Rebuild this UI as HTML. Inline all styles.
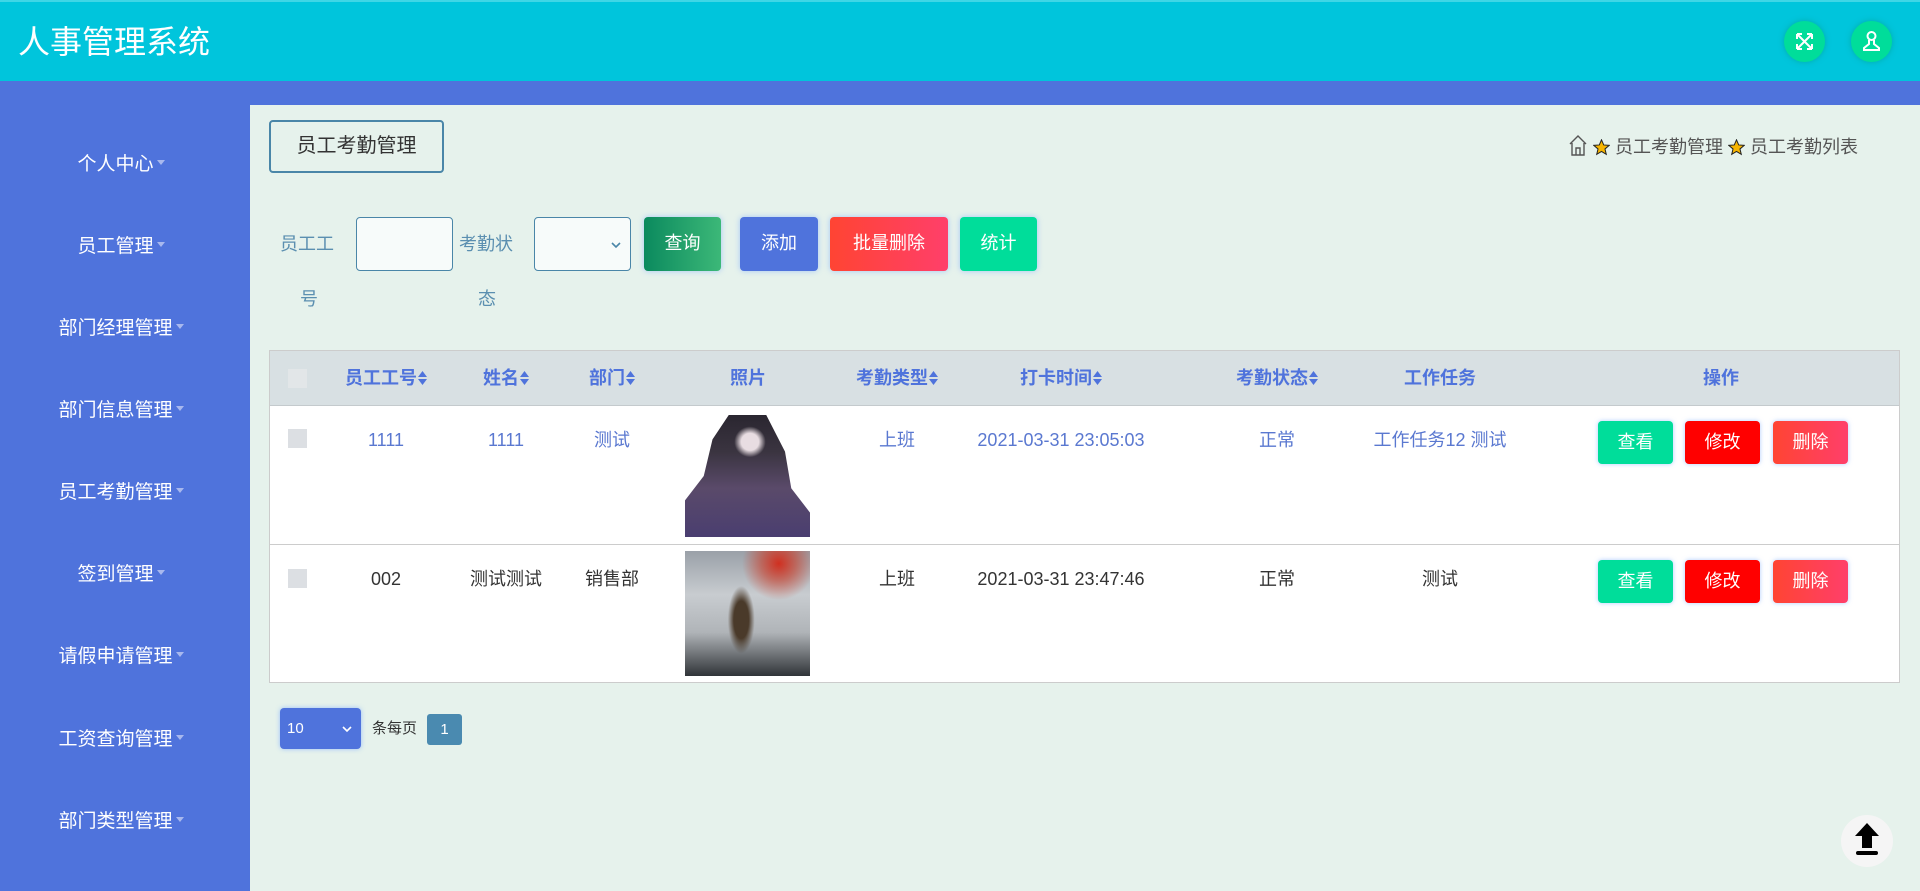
<!DOCTYPE html>
<html><head><meta charset="utf-8">
<style>
*{box-sizing:border-box;margin:0;padding:0}
body{width:1920px;height:891px;overflow:hidden;background:#e6f2ec;font-family:"Liberation Sans","Noto Sans CJK SC",sans-serif;position:relative}
.hdr{position:absolute;left:0;top:0;width:1920px;height:81px;background:#00c5dc;border-top:2px solid #3fd6e6}
.title{position:absolute;left:18px;top:20px;color:#fff;font-size:32px;line-height:40px}
.circ{position:absolute;top:19px;width:41px;height:41px;border-radius:50%;background:#00dd9a;box-shadow:0 0 6px rgba(0,150,120,.5)}
.band{position:absolute;left:0;top:81px;width:1920px;height:24px;background:#4f73dc}
.side{position:absolute;left:0;top:81px;width:250px;height:810px;background:#4f73dc}
.si{position:absolute;left:-4px;width:250px;text-align:center;color:#fff;font-size:19px;line-height:26px}
.si i{display:inline-block;width:0;height:0;border-left:4px solid transparent;border-right:4px solid transparent;border-top:5px solid #a8b8ee;vertical-align:middle;margin-left:3px;margin-top:-4px}
.tab{position:absolute;left:269px;top:120px;width:175px;height:53px;border:2px solid #4a86a8;border-radius:4px;color:#333;font-size:20px;text-align:center;line-height:49px}
.bc{position:absolute;left:1568px;top:133px;font-size:18px;color:#555;line-height:24px}
.st{display:inline-block;width:17px;height:17px;vertical-align:-3px}
.lbl{position:absolute;color:#5b8fb0;font-size:18px;line-height:24px}
.inp{position:absolute;top:217px;height:54px;border:1px solid #4a86a8;border-radius:4px;background:#f7fbfa}
.btn{position:absolute;color:#fff;font-size:18px;text-align:center;border-radius:4px;box-shadow:0 0 6px rgba(120,170,255,.6)}
.tb{position:absolute;left:269px;top:350px;width:1631px;height:333px;background:#fff;border:1px solid #ccc}
.th{position:absolute;left:0;top:0;width:100%;height:55px;background:#d8e0e3;border-bottom:1px solid #c4cacd}
.c{position:absolute;transform:translateX(-50%);white-space:nowrap;font-size:18px;line-height:24px}
.h{color:#4f73dc;font-weight:bold;top:15px}
.r1{color:#5a78d0}
.r2{color:#333}
.cb{position:absolute;left:18px;width:19px;height:19px;background:#dcdfe3}
.sb{position:absolute;width:75px;height:43px;line-height:43px;color:#fff;font-size:18px;text-align:center;border-radius:4px;box-shadow:0 0 5px rgba(120,170,255,.6)}
.arr{display:inline-block;width:9px;height:14px;vertical-align:-1px;margin-left:1px}
</style></head><body>
<svg width="0" height="0" style="position:absolute"><defs><symbol id="ar" viewBox="0 0 9 14"><path d="M4.5 0L9 6H0zM0 8h9l-4.5 6z" fill="#4f73dc"/></symbol><symbol id="star" viewBox="0 0 20 20"><path d="M10 1l2.6 6 6.4.5-4.9 4.2 1.5 6.3L10 14.6 4.4 18l1.5-6.3L1 7.5l6.4-.5z" fill="#f7b500" stroke="#222" stroke-width="1.2"/></symbol></defs></svg>
<div class="hdr"><div class="title">人事管理系统</div>
<div class="circ" style="left:1784px"><svg width="41" height="41" viewBox="0 0 41 41"><g stroke="#fff" stroke-width="2" fill="none"><path d="M13 13l15 15M28 13L13 28M13 13h5M13 13v5M28 13h-5M28 13v5M13 28h5M13 28v-5M28 28h-5M28 28v-5"/></g></svg></div>
<div class="circ" style="left:1851px"><svg width="41" height="41" viewBox="0 0 41 41"><g stroke="#fff" stroke-width="2" fill="none"><circle cx="20.5" cy="15" r="4"/><path d="M18 19v4l-5 4v2h15v-2l-5-4v-4"/></g></svg></div>
</div>
<div class="band"></div>
<div class="side">
<div class="si" style="top:71px">个人中心<i></i></div>
<div class="si" style="top:153px">员工管理<i></i></div>
<div class="si" style="top:235px">部门经理管理<i></i></div>
<div class="si" style="top:317px">部门信息管理<i></i></div>
<div class="si" style="top:399px">员工考勤管理<i></i></div>
<div class="si" style="top:481px">签到管理<i></i></div>
<div class="si" style="top:563px">请假申请管理<i></i></div>
<div class="si" style="top:646px">工资查询管理<i></i></div>
<div class="si" style="top:728px">部门类型管理<i></i></div>
</div>
<div class="tab">员工考勤管理</div>
<div class="bc"><svg width="20" height="24" viewBox="0 0 20 24" style="vertical-align:-4px"><path d="M2 11l8-8 8 8M4 10v12h12V10M8 22v-7h4v7" stroke="#555" stroke-width="1.4" fill="none"/></svg> <svg class="st"><use href="#star"/></svg> 员工考勤管理 <svg class="st"><use href="#star"/></svg> 员工考勤列表</div>
<div class="lbl" style="left:280px;top:232px">员工工</div>
<div class="lbl" style="left:300px;top:287px">号</div>
<div class="inp" style="left:356px;width:97px"></div>
<div class="lbl" style="left:459px;top:232px">考勤状</div>
<div class="lbl" style="left:478px;top:287px">态</div>
<div class="inp" style="left:534px;width:97px"><svg width="10" height="8" viewBox="0 0 10 8" style="position:absolute;right:9px;top:23px"><path d="M1 2l4 4 4-4" stroke="#4a86a8" stroke-width="1.6" fill="none"/></svg></div>
<div class="btn" style="left:644px;top:217px;width:77px;height:54px;line-height:52px;background:linear-gradient(90deg,#0b8a5e,#3cb878)">查询</div>
<div class="btn" style="left:740px;top:217px;width:78px;height:54px;line-height:52px;background:#4f73dc">添加</div>
<div class="btn" style="left:830px;top:217px;width:118px;height:54px;line-height:52px;background:linear-gradient(90deg,#ff4433,#ff3f6a)">批量删除</div>
<div class="btn" style="left:960px;top:217px;width:77px;height:54px;line-height:52px;background:#00dd9a">统计</div>
<div class="tb">
<div class="th">
<div class="cb" style="top:18px;background:#e2e6e8"></div>
<div class="c h" style="left:116px">员工工号<svg class="arr"><use href="#ar"/></svg></div>
<div class="c h" style="left:236px">姓名<svg class="arr"><use href="#ar"/></svg></div>
<div class="c h" style="left:342px">部门<svg class="arr"><use href="#ar"/></svg></div>
<div class="c h" style="left:478px">照片</div>
<div class="c h" style="left:627px">考勤类型<svg class="arr"><use href="#ar"/></svg></div>
<div class="c h" style="left:791px">打卡时间<svg class="arr"><use href="#ar"/></svg></div>
<div class="c h" style="left:1007px">考勤状态<svg class="arr"><use href="#ar"/></svg></div>
<div class="c h" style="left:1170px">工作任务</div>
<div class="c h" style="left:1451px">操作</div>
</div>
<div style="position:absolute;left:0;top:193px;width:100%;height:1px;background:#ccc"></div>
<div class="cb" style="top:78px"></div>
<div class="c r1" style="left:116px;top:77px">1111</div>
<div class="c r1" style="left:236px;top:77px">1111</div>
<div class="c r1" style="left:342px;top:77px">测试</div>
<div style="position:absolute;left:415px;top:64px;width:125px;height:122px;background:radial-gradient(ellipse 14% 14% at 52% 22%,#e8dde2 50%,transparent 90%),linear-gradient(180deg,#2a2630 0%,#3a3440 30%,#5a4a6a 60%,#4a3e70 100%);clip-path:polygon(35% 0,65% 0,80% 30%,85% 60%,100% 80%,100% 100%,0 100%,0 70%,15% 50%,22% 20%)"></div>
<div class="c r1" style="left:627px;top:77px">上班</div>
<div class="c r1" style="left:791px;top:77px">2021-03-31 23:05:03</div>
<div class="c r1" style="left:1007px;top:77px">正常</div>
<div class="c r1" style="left:1170px;top:77px">工作任务12 测试</div>
<div class="sb" style="left:1328px;top:70px;background:#00dd9a">查看</div>
<div class="sb" style="left:1415px;top:70px;background:#ff0000">修改</div>
<div class="sb" style="left:1503px;top:70px;background:linear-gradient(90deg,#ff4433,#ff3f6a)">删除</div>
<div class="cb" style="top:218px"></div>
<div class="c r2" style="left:116px;top:216px">002</div>
<div class="c r2" style="left:236px;top:216px">测试测试</div>
<div class="c r2" style="left:342px;top:216px">销售部</div>
<div style="position:absolute;left:415px;top:200px;width:125px;height:125px;background:radial-gradient(circle at 75% 10%,#d03020 0%,rgba(200,60,40,.6) 12%,transparent 25%),radial-gradient(ellipse 12% 30% at 45% 55%,#4a3a2a 50%,transparent 90%),linear-gradient(180deg,#9aa0a8 0%,#c8ccd0 35%,#b0b4b8 65%,#303438 100%)"></div>
<div class="c r2" style="left:627px;top:216px">上班</div>
<div class="c r2" style="left:791px;top:216px">2021-03-31 23:47:46</div>
<div class="c r2" style="left:1007px;top:216px">正常</div>
<div class="c r2" style="left:1170px;top:216px">测试</div>
<div class="sb" style="left:1328px;top:209px;background:#00dd9a">查看</div>
<div class="sb" style="left:1415px;top:209px;background:#ff0000">修改</div>
<div class="sb" style="left:1503px;top:209px;background:linear-gradient(90deg,#ff4433,#ff3f6a)">删除</div>
</div>
<div style="position:absolute;left:280px;top:708px;width:81px;height:41px;background:#4f73dc;border-radius:4px;box-shadow:0 0 5px rgba(120,170,255,.7);color:#fff;font-size:15px;line-height:41px;padding-left:7px">10<svg width="10" height="8" viewBox="0 0 10 8" style="position:absolute;right:9px;top:17px"><path d="M1 2l4 4 4-4" stroke="#fff" stroke-width="1.6" fill="none"/></svg></div>
<div style="position:absolute;left:372px;top:718px;font-size:15px;color:#333;line-height:22px">条每页</div>
<div style="position:absolute;left:427px;top:714px;width:35px;height:31px;background:#4a8ab0;border-radius:3px;color:#fff;font-size:15px;text-align:center;line-height:31px">1</div>
<div style="position:absolute;left:1841px;top:815px;width:52px;height:52px;border-radius:50%;background:#f5f5f5">
<svg width="52" height="52" viewBox="0 0 52 52"><path d="M26 8L14 21h7v12h10V21h7z" fill="#000"/><rect x="15" y="36" width="22" height="4" rx="2" fill="#000"/></svg></div>
</body></html>
